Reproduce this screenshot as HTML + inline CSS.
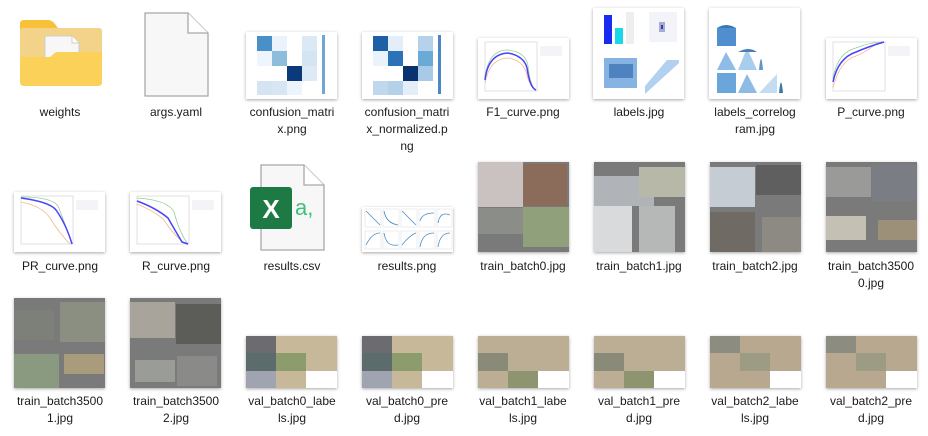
<!DOCTYPE html>
<html><head><meta charset="utf-8"><style>
*{margin:0;padding:0;box-sizing:border-box}
body{width:928px;height:436px;background:#fff;position:relative;overflow:hidden;font-family:"Liberation Sans","Noto Sans CJK SC",sans-serif;font-size:12px;color:#1a1a1a}
.lbl{position:absolute;width:112px;text-align:center;line-height:17px;word-break:break-all}
.th{position:absolute;background:#fff;box-shadow:0 1px 3px rgba(0,0,0,.35)}
.ph{position:absolute;box-shadow:0 1px 3px rgba(0,0,0,.35);background:#7a7a7a;overflow:hidden}
.ph i{position:absolute;display:block}
</style></head><body>

<!-- folder -->
<svg style="position:absolute;left:18px;top:18px" width="86" height="70" viewBox="0 0 86 70">
<path d="M2 6 Q2 2 6 2 H30 Q34 2 37 6 L40 10 H80 Q84 10 84 14 V30 H2 Z" fill="#f7c13a"/>
<rect x="2" y="10" width="82" height="50" rx="3" fill="#f3d38a"/>
<path d="M27 18 H54 L61 25 V46 H27 Z" fill="#f7f7f7" stroke="#ccc"/>
<path d="M54 18 V25 H61" fill="#fff" stroke="#ccc"/>
<path d="M2 39 H32 L38 34 H84 V64 Q84 68 80 68 H6 Q2 68 2 64 Z" fill="#fcd159"/>
</svg>
<!-- args.yaml -->
<svg style="position:absolute;left:144px;top:12px" width="66" height="86" viewBox="0 0 66 86">
<path d="M1 1 H44 L64 21 V84 H1 Z" fill="#f7f7f7" stroke="#a8a8a8" stroke-width="1.3"/>
<path d="M44 1 V21 H64" fill="#fff" stroke="#a8a8a8" stroke-width="1.3"/>
</svg>

<!-- confusion matrices -->
<div class="th" style="left:246px;top:32px;width:91px;height:67px">
<svg width="91" height="67"><rect x="11" y="4" width="15" height="15" fill="#4a90c8"/><rect x="26" y="4" width="15" height="15" fill="#eaf2fb"/><rect x="56" y="4" width="15" height="15" fill="#dbe8f5"/>
<rect x="11" y="19" width="15" height="15" fill="#eef5fc"/><rect x="26" y="19" width="15" height="15" fill="#8dbddc"/><rect x="56" y="19" width="15" height="15" fill="#d3e4f3"/>
<rect x="41" y="34" width="15" height="15" fill="#0a3a7a"/><rect x="56" y="34" width="15" height="15" fill="#dde9f5"/>
<rect x="11" y="49" width="15" height="14" fill="#d4e4f3"/><rect x="26" y="49" width="15" height="14" fill="#d8e6f4"/><rect x="41" y="49" width="15" height="14" fill="#eef4fb"/>
<rect x="76" y="3" width="3" height="59" fill="#6fa6d4"/></svg></div>
<div class="th" style="left:362px;top:32px;width:91px;height:67px">
<svg width="91" height="67"><rect x="11" y="4" width="15" height="15" fill="#1f5fa6"/><rect x="26" y="4" width="15" height="15" fill="#e4eef9"/><rect x="56" y="4" width="15" height="15" fill="#b6d2ea"/>
<rect x="11" y="19" width="15" height="15" fill="#eaf2fb"/><rect x="26" y="19" width="15" height="15" fill="#2b72b8"/><rect x="56" y="19" width="15" height="15" fill="#6aaad6"/>
<rect x="41" y="34" width="15" height="15" fill="#0a3270"/><rect x="56" y="34" width="15" height="15" fill="#a8cae6"/>
<rect x="11" y="49" width="15" height="14" fill="#c0d8ee"/><rect x="26" y="49" width="15" height="14" fill="#b4d1ea"/><rect x="41" y="49" width="15" height="14" fill="#e4eef9"/>
<rect x="76" y="3" width="3" height="59" fill="#4a88c4"/></svg></div>

<!-- F1 curve -->
<div class="th" style="left:478px;top:38px;width:91px;height:61px">
<svg width="91" height="61"><rect x="7" y="4" width="52" height="49" fill="none" stroke="#ccc" stroke-width=".6"/>
<path d="M7 40 Q10 12 30 12 Q48 14 50 28 Q52 48 58 52" fill="none" stroke="#9c9" stroke-width=".8"/>
<path d="M7 45 Q12 20 30 20 Q44 22 48 34 Q52 50 58 52" fill="none" stroke="#f5b98a" stroke-width=".8"/>
<path d="M7 42 Q10 16 30 15 Q46 18 49 30 Q52 50 58 52" fill="none" stroke="#44f" stroke-width="1.5"/>
<rect x="62" y="8" width="22" height="10" fill="#f4f4f8"/></svg></div>
<!-- labels.jpg -->
<div class="th" style="left:593px;top:8px;width:91px;height:91px">
<svg width="91" height="91"><rect x="11" y="7" width="8" height="29" fill="#1a2bf0"/><rect x="22" y="20" width="8" height="16" fill="#1ad8e8"/><rect x="33" y="4" width="8" height="32" fill="#eee"/>
<rect x="56" y="4" width="28" height="30" fill="#f3f4fa"/><rect x="66" y="14" width="6" height="10" fill="#aac"/><rect x="68" y="17" width="2" height="4" fill="#24c"/>
<rect x="11" y="50" width="33" height="30" fill="#5f9ad8" opacity=".75"/><rect x="16" y="56" width="24" height="14" fill="#2a62a8" opacity=".6"/>
<path d="M52 86 L86 55 L86 52 L74 52 L52 78 Z" fill="#7fb0e6" opacity=".6"/></svg></div>
<!-- correlogram -->
<div class="th" style="left:709px;top:8px;width:91px;height:91px">
<svg width="91" height="91"><rect x="8" y="20" width="19" height="18" fill="#4f8fcf"/><path d="M8 20 Q17 14 27 20Z" fill="#3a78b0"/>
<path d="M8 62 L17 44 L27 62Z" fill="#8fbce6"/><path d="M29 62 L38 40 L48 62Z" fill="#a9cdec"/><path d="M50 62 Q52 40 54 62 H70Z" fill="#5d97c6"/><path d="M29 44 Q40 38 48 44Z" fill="#4a7faf"/>
<rect x="8" y="65" width="19" height="20" fill="#6aa5db"/><path d="M29 85 L38 66 L48 85Z" fill="#8dbbe4"/><path d="M50 85 L68 66 V85Z" fill="#c4dcf1"/><path d="M70 85 Q72 64 74 85 H90Z" fill="#3c7aa8"/></svg></div>
<!-- P curve -->
<div class="th" style="left:826px;top:38px;width:91px;height:61px">
<svg width="91" height="61"><rect x="7" y="4" width="52" height="49" fill="none" stroke="#ccc" stroke-width=".6"/>
<path d="M7 40 Q12 14 30 10 Q44 4 58 4" fill="none" stroke="#9c9" stroke-width=".8"/>
<path d="M7 50 Q14 22 30 18 Q44 12 52 4" fill="none" stroke="#f5b98a" stroke-width=".8"/>
<path d="M7 44 Q12 20 30 14 Q44 8 58 4" fill="none" stroke="#44f" stroke-width="1.5"/>
<rect x="62" y="8" width="22" height="10" fill="#f4f4f8"/></svg></div>

<!-- PR -->
<div class="th" style="left:14px;top:192px;width:91px;height:60px">
<svg width="91" height="60"><rect x="7" y="4" width="52" height="48" fill="none" stroke="#ccc" stroke-width=".6"/>
<path d="M7 5 Q38 5 44 14 Q52 34 58 52" fill="none" stroke="#9c9" stroke-width=".8"/>
<path d="M7 10 Q28 14 36 26 Q46 42 56 52" fill="none" stroke="#f5b98a" stroke-width=".8"/>
<path d="M7 6 Q36 10 42 18 Q52 32 58 52" fill="none" stroke="#44f" stroke-width="1.5"/>
<rect x="62" y="8" width="22" height="10" fill="#f4f4f8"/></svg></div>
<!-- R -->
<div class="th" style="left:130px;top:192px;width:91px;height:60px">
<svg width="91" height="60"><rect x="7" y="4" width="52" height="48" fill="none" stroke="#ccc" stroke-width=".6"/>
<path d="M7 6 Q38 8 44 20 Q50 42 58 52" fill="none" stroke="#9c9" stroke-width=".8"/>
<path d="M7 12 Q26 20 34 28 Q44 44 56 52" fill="none" stroke="#f5b98a" stroke-width=".8"/>
<path d="M7 9 Q26 16 38 26 Q46 40 52 50 L58 52" fill="none" stroke="#44f" stroke-width="1.5"/>
<rect x="62" y="8" width="22" height="10" fill="#f4f4f8"/></svg></div>
<!-- csv -->
<svg style="position:absolute;left:248px;top:164px" width="80" height="88" viewBox="0 0 80 88">
<path d="M13 1 H56 L76 21 V86 H13 Z" fill="#f7f7f7" stroke="#a8a8a8" stroke-width="1.3"/>
<path d="M56 1 V21 H76" fill="#fff" stroke="#a8a8a8" stroke-width="1.3"/>
<rect x="2" y="23" width="42" height="42" rx="3" fill="#1e7a45"/>
<text x="23" y="54" text-anchor="middle" font-family="Liberation Sans" font-weight="bold" font-size="26" fill="#fff">X</text>
<text x="47" y="51" font-family="Liberation Sans" font-size="22" fill="#3ec07a">a,</text>
</svg>
<!-- results.png -->
<div class="th" style="left:362px;top:207px;width:91px;height:45px">
<svg width="91" height="45"><g fill="none" stroke="#4a8cc4" stroke-width=".8">
<path d="M4 4 L18 18"/><path d="M22 4 Q24 16 36 18"/><path d="M40 4 L54 18"/><path d="M58 14 Q60 6 72 6"/><path d="M76 16 Q78 4 88 8"/>
<path d="M4 38 Q10 26 18 26"/><path d="M22 26 Q24 40 36 38"/><path d="M40 38 Q48 28 54 26"/><path d="M58 40 Q60 26 72 26"/><path d="M76 40 Q78 26 88 26"/></g>
<g fill="none" stroke="#ddd" stroke-width=".5"><rect x="3" y="2" width="16" height="18"/><rect x="21" y="2" width="16" height="18"/><rect x="39" y="2" width="16" height="18"/><rect x="57" y="2" width="16" height="18"/><rect x="75" y="2" width="15" height="18"/>
<rect x="3" y="24" width="16" height="18"/><rect x="21" y="24" width="16" height="18"/><rect x="39" y="24" width="16" height="18"/><rect x="57" y="24" width="16" height="18"/><rect x="75" y="24" width="15" height="18"/></g></svg></div>

<!-- train batches -->
<div class="ph" style="left:478px;top:162px;width:91px;height:90px"><i style="left:0;top:0;width:45px;height:45px;background:#c9c2c0"></i><i style="left:45px;top:2px;width:44px;height:42px;background:#8b6b5a"></i><i style="left:0;top:46px;width:45px;height:26px;background:#8a8d88"></i><i style="left:45px;top:45px;width:46px;height:40px;background:#8fa07a"></i></div>
<div class="ph" style="left:594px;top:162px;width:91px;height:90px"><i style="left:0;top:14px;width:60px;height:30px;background:#b0b4b8"></i><i style="left:45px;top:5px;width:46px;height:30px;background:#b8b8a8"></i><i style="left:0;top:44px;width:38px;height:46px;background:#d8dadc"></i><i style="left:45px;top:44px;width:36px;height:46px;background:#b6b8b8"></i></div>
<div class="ph" style="left:710px;top:162px;width:91px;height:90px"><i style="left:0;top:5px;width:45px;height:40px;background:#c6ccd4"></i><i style="left:46px;top:3px;width:45px;height:30px;background:#5f5f5f"></i><i style="left:0;top:50px;width:45px;height:40px;background:#6f6a64"></i><i style="left:52px;top:55px;width:39px;height:35px;background:#8d8a84"></i></div>
<div class="ph" style="left:826px;top:162px;width:91px;height:90px"><i style="left:0;top:5px;width:45px;height:30px;background:#9a9a98"></i><i style="left:46px;top:3px;width:45px;height:36px;background:#7a7e84"></i><i style="left:0;top:54px;width:40px;height:24px;background:#c4c0b4"></i><i style="left:52px;top:58px;width:39px;height:20px;background:#9c9078"></i></div>

<div class="ph" style="left:14px;top:298px;width:91px;height:90px"><i style="left:0;top:12px;width:40px;height:30px;background:#7c8078"></i><i style="left:46px;top:4px;width:45px;height:40px;background:#8a8f82"></i><i style="left:0;top:56px;width:45px;height:34px;background:#8a9a80"></i><i style="left:50px;top:56px;width:40px;height:20px;background:#a89c7c"></i></div>
<div class="ph" style="left:130px;top:298px;width:91px;height:90px"><i style="left:0;top:4px;width:45px;height:36px;background:#a8a49c"></i><i style="left:46px;top:6px;width:45px;height:40px;background:#5c5c58"></i><i style="left:5px;top:62px;width:40px;height:22px;background:#9a9c98"></i><i style="left:47px;top:58px;width:40px;height:30px;background:#8a8a88"></i></div>

<!-- val batches -->
<div class="ph" style="left:246px;top:336px;width:91px;height:52px;background:#c8b89a"><i style="left:0;top:0;width:30px;height:17px;background:#6c6c70"></i><i style="left:0;top:17px;width:30px;height:18px;background:#5c6c6c"></i><i style="left:0;top:35px;width:30px;height:17px;background:#a0a4b0"></i><i style="left:30px;top:17px;width:30px;height:18px;background:#8c9c6c"></i><i style="left:60px;top:35px;width:31px;height:17px;background:#fff"></i></div>
<div class="ph" style="left:362px;top:336px;width:91px;height:52px;background:#c8b89a"><i style="left:0;top:0;width:30px;height:17px;background:#6c6c70"></i><i style="left:0;top:17px;width:30px;height:18px;background:#5c6c6c"></i><i style="left:0;top:35px;width:30px;height:17px;background:#a0a4b0"></i><i style="left:30px;top:17px;width:30px;height:18px;background:#8c9c6c"></i><i style="left:60px;top:35px;width:31px;height:17px;background:#fff"></i></div>
<div class="ph" style="left:478px;top:336px;width:91px;height:52px;background:#bcae94"><i style="left:0;top:17px;width:30px;height:18px;background:#8a8a78"></i><i style="left:30px;top:35px;width:30px;height:17px;background:#8c9470"></i><i style="left:60px;top:35px;width:31px;height:17px;background:#fff"></i></div>
<div class="ph" style="left:594px;top:336px;width:91px;height:52px;background:#bcae94"><i style="left:0;top:17px;width:30px;height:18px;background:#8a8a78"></i><i style="left:30px;top:35px;width:30px;height:17px;background:#8c9470"></i><i style="left:60px;top:35px;width:31px;height:17px;background:#fff"></i></div>
<div class="ph" style="left:710px;top:336px;width:91px;height:52px;background:#b8a890"><i style="left:0;top:0;width:30px;height:17px;background:#8c8c80"></i><i style="left:30px;top:17px;width:30px;height:18px;background:#9c9c84"></i><i style="left:60px;top:35px;width:31px;height:17px;background:#fff"></i></div>
<div class="ph" style="left:826px;top:336px;width:91px;height:52px;background:#b8a890"><i style="left:0;top:0;width:30px;height:17px;background:#8c8c80"></i><i style="left:30px;top:17px;width:30px;height:18px;background:#9c9c84"></i><i style="left:60px;top:35px;width:31px;height:17px;background:#fff"></i></div>

<!-- labels row1 -->
<div class="lbl" style="left:4px;top:104px">weights</div>
<div class="lbl" style="left:120px;top:104px">args.yaml</div>
<div class="lbl" style="left:236px;top:104px">confusion_matri<br>x.png</div>
<div class="lbl" style="left:351px;top:104px">confusion_matri<br>x_normalized.p<br>ng</div>
<div class="lbl" style="left:467px;top:104px">F1_curve.png</div>
<div class="lbl" style="left:583px;top:104px">labels.jpg</div>
<div class="lbl" style="left:699px;top:104px">labels_correlog<br>ram.jpg</div>
<div class="lbl" style="left:815px;top:104px">P_curve.png</div>
<!-- row2 -->
<div class="lbl" style="left:4px;top:258px">PR_curve.png</div>
<div class="lbl" style="left:120px;top:258px">R_curve.png</div>
<div class="lbl" style="left:236px;top:258px">results.csv</div>
<div class="lbl" style="left:351px;top:258px">results.png</div>
<div class="lbl" style="left:467px;top:258px">train_batch0.jpg</div>
<div class="lbl" style="left:583px;top:258px">train_batch1.jpg</div>
<div class="lbl" style="left:699px;top:258px">train_batch2.jpg</div>
<div class="lbl" style="left:815px;top:258px">train_batch3500<br>0.jpg</div>
<!-- row3 -->
<div class="lbl" style="left:4px;top:393px">train_batch3500<br>1.jpg</div>
<div class="lbl" style="left:120px;top:393px">train_batch3500<br>2.jpg</div>
<div class="lbl" style="left:236px;top:393px">val_batch0_labe<br>ls.jpg</div>
<div class="lbl" style="left:351px;top:393px">val_batch0_pre<br>d.jpg</div>
<div class="lbl" style="left:467px;top:393px">val_batch1_labe<br>ls.jpg</div>
<div class="lbl" style="left:583px;top:393px">val_batch1_pre<br>d.jpg</div>
<div class="lbl" style="left:699px;top:393px">val_batch2_labe<br>ls.jpg</div>
<div class="lbl" style="left:815px;top:393px">val_batch2_pre<br>d.jpg</div>
</body></html>
